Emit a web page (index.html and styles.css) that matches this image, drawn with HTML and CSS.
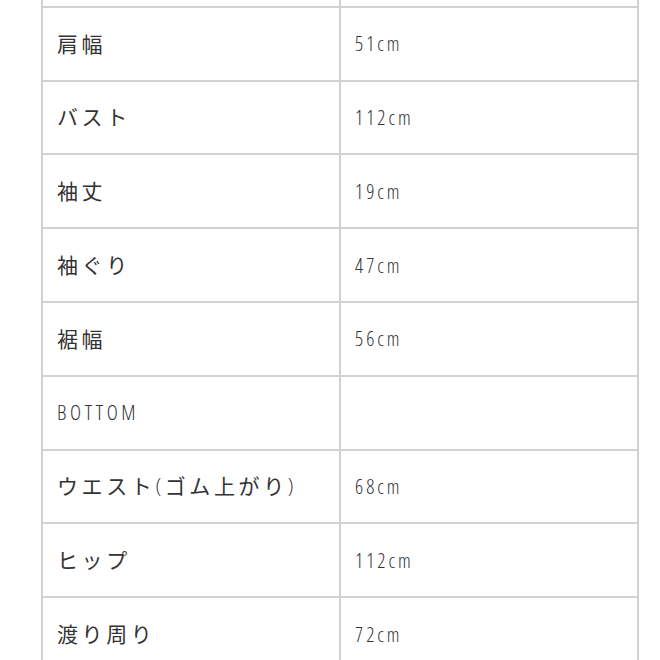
FILE: index.html
```html
<!DOCTYPE html>
<html lang="ja">
<head>
<meta charset="utf-8">
<title>サイズ表</title>
<link rel="stylesheet" href="styles.css">
</head>
<body>
<div class="wrap">
  <div class="size-table">
    <div class="cell label"></div><div class="cell value"></div>
    <div class="cell label">肩幅</div><div class="cell value">51cm</div>
    <div class="cell label">バスト</div><div class="cell value">112cm</div>
    <div class="cell label">袖丈</div><div class="cell value">19cm</div>
    <div class="cell label">袖ぐり</div><div class="cell value">47cm</div>
    <div class="cell label">裾幅</div><div class="cell value">56cm</div>
    <div class="cell label"><span class="en">BOTTOM</span></div><div class="cell value"></div>
    <div class="cell label">ウエスト<span class="en">(</span>ゴム上がり<span class="en">)</span></div><div class="cell value">68cm</div>
    <div class="cell label">ヒップ</div><div class="cell value">112cm</div>
    <div class="cell label">渡り周り</div><div class="cell value">72cm</div>
  </div>
</div>
</body>
</html>
```
FILE: styles.css
```css
html, body {
  margin: 0;
  padding: 0;
  background: #ffffff;
}
.wrap {
  padding-left: 41px;
  width: 598px;
  margin-top: -68px;
}
.size-table {
  display: grid;
  grid-template-columns: 296px 296px;
  grid-auto-rows: 71.8px;
  gap: 2px;
  padding: 2px;
  background: #d2d2d2;
}
.cell {
  background: #ffffff;
  display: flex;
  align-items: center;
  padding-left: 14px;
  font-family: "Open Sans", "Noto Sans CJK JP", sans-serif;
  font-stretch: condensed;
  white-space: nowrap;
}
.label {
  font-size: 21px;
  font-weight: 400;
  letter-spacing: 3.6px;
  color: #333333;
  padding-bottom: 2px;
}
.label .en {
  font-weight: 300;
  color: #333333;
}
.value {
  font-size: 20px;
  font-weight: 300;
  letter-spacing: 3px;
  color: #333333;
}
```
